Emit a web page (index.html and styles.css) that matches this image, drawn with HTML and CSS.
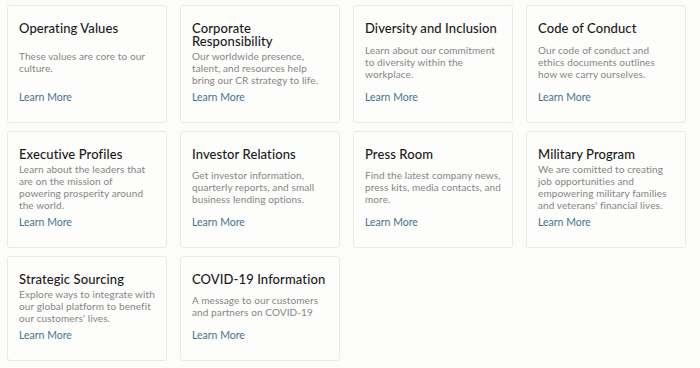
FILE: index.html
```html
<!DOCTYPE html>
<html lang="en">
<head>
    <meta charset="UTF-8">
    <meta name="viewport" content="width=device-width, initial-scale=1.0">
    <title>About Us</title>
    <link rel="stylesheet" href="styles.css">
</head>
<body>
    <main class="cards">
        <!-- Row 1 -->
        <article class="card">
            <h3 class="card-title">Operating Values</h3>
            <p class="card-text">These values are core to our culture.</p>
            <a class="card-link" href="#">Learn More</a>
        </article>
        <article class="card">
            <h3 class="card-title">Corporate Responsibility</h3>
            <p class="card-text">Our worldwide presence, talent, and resources help bring our CR strategy to life.</p>
            <a class="card-link" href="#">Learn More</a>
        </article>
        <article class="card">
            <h3 class="card-title">Diversity and Inclusion</h3>
            <p class="card-text">Learn about our commitment to diversity within the workplace.</p>
            <a class="card-link" href="#">Learn More</a>
        </article>
        <article class="card">
            <h3 class="card-title">Code of Conduct</h3>
            <p class="card-text">Our code of conduct and ethics documents outlines<br>how we carry ourselves.</p>
            <a class="card-link" href="#">Learn More</a>
        </article>

        <!-- Row 2 -->
        <article class="card">
            <h3 class="card-title">Executive Profiles</h3>
            <p class="card-text">Learn about the leaders that are on the mission of<br>powering prosperity around the world.</p>
            <a class="card-link" href="#">Learn More</a>
        </article>
        <article class="card">
            <h3 class="card-title">Investor Relations</h3>
            <p class="card-text">Get investor information, quarterly reports, and small business lending options.</p>
            <a class="card-link" href="#">Learn More</a>
        </article>
        <article class="card">
            <h3 class="card-title">Press Room</h3>
            <p class="card-text">Find the latest company news, press kits, media contacts, and more.</p>
            <a class="card-link" href="#">Learn More</a>
        </article>
        <article class="card">
            <h3 class="card-title">Military Program</h3>
            <p class="card-text">We are comitted to creating job opportunities and empowering military families and veterans' financial lives.</p>
            <a class="card-link" href="#">Learn More</a>
        </article>

        <!-- Row 3 -->
        <article class="card">
            <h3 class="card-title">Strategic Sourcing</h3>
            <p class="card-text">Explore ways to integrate with our global platform to benefit our customers' lives.</p>
            <a class="card-link" href="#">Learn More</a>
        </article>
        <article class="card">
            <h3 class="card-title">COVID-19 Information</h3>
            <p class="card-text">A message to our customers and partners on COVID-19</p>
            <a class="card-link" href="#">Learn More</a>
        </article>
    </main>
</body>
</html>
```

FILE: styles.css
```css
/* Reset */
* {
    margin: 0;
    padding: 0;
    box-sizing: border-box;
}

body {
    font-family: Lato, "Open Sans", Arial, sans-serif;
    background-color: #fcfcfa;
    color: #222;
}

/* Card grid */
.cards {
    display: grid;
    grid-template-columns: repeat(4, 160px);
    column-gap: 13px;
    row-gap: 8px;
    padding: 5px 0 0 7px;
}

.card {
    display: flex;
    flex-direction: column;
    background-color: #fdfdfb;
    border: 1px solid #e9e9e5;
    border-radius: 3px;
    padding: 16px 11px 18px 11px;
}

.card-title {
    font-size: 13px;
    font-weight: 500;
    line-height: 13px;
    color: #1a1a1a;
    letter-spacing: 0.1px;
}

.card-text {
    font-size: 10px;
    line-height: 12px;
    color: #858585;
    letter-spacing: 0.1px;
    margin: auto 0;
    padding: 2px 0 5px 0;
}

.card-link {
    font-size: 10.5px;
    line-height: 13px;
    color: #46728f;
    text-decoration: none;
}
```
